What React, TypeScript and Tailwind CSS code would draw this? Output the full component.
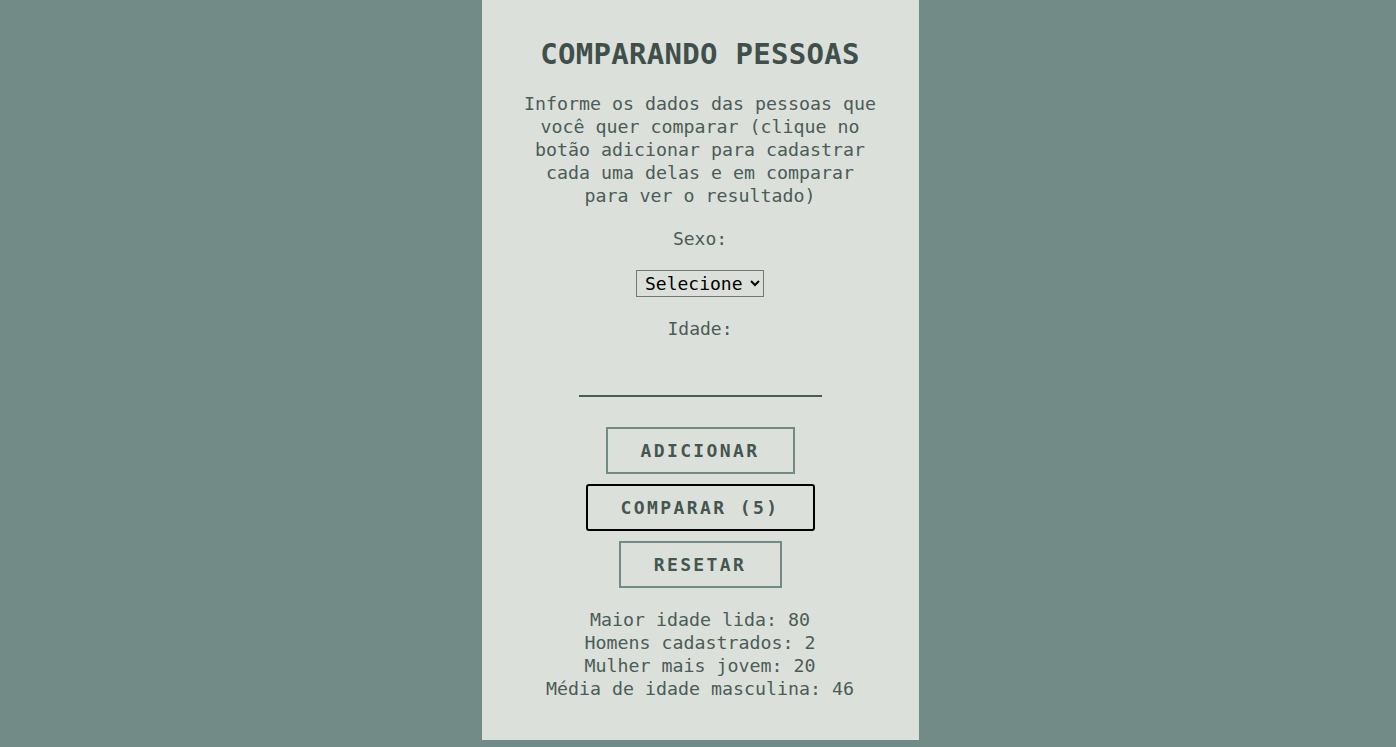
import React from "react";

const mono = { fontFamily: '"DejaVu Sans Mono", "Liberation Mono", monospace' };

export default function App() {
  return (
    <div className="min-h-[747px] w-full bg-[#738b86] pl-[4px]" style={mono}>
      <div className="mx-auto flex h-[740px] w-[437px] flex-col items-center bg-[#dce0db] text-[#4b5c57]">
        <h1 className="mt-[36px] text-[29px] font-bold leading-[36px] tracking-[0.3px] text-[#3f504b]">
          COMPARANDO PESSOAS
        </h1>
        <p className="mt-[20px] text-center text-[18.3px] leading-[23px]">
          Informe os dados das pessoas que
          <br />
          você quer comparar (clique no
          <br />
          botão adicionar para cadastrar
          <br />
          cada uma delas e em comparar
          <br />
          para ver o resultado)
        </p>
        <label className="mt-[20px] text-[18px] leading-[23px]">Sexo:</label>
        <select
          className="mt-[20px] h-[27px] border border-[#767676] bg-transparent px-[4px] text-[18px] leading-[23px] text-black"
          defaultValue=""
        >
          <option value="">Selecione</option>
          <option value="m">Masculino</option>
          <option value="f">Feminino</option>
        </select>
        <label className="mt-[20px] text-[18px] leading-[23px]">Idade:</label>
        <input
          type="number"
          className="mt-[19px] h-[38px] w-[243px] border-0 border-b-2 border-[#4b5c57] bg-transparent text-center text-[18px] outline-none"
        />
        <div className="mt-[30px] flex flex-col items-center gap-[10px]">
          <button className="h-[47px] w-[189px] border-2 border-[#738b86] text-[18px] font-bold tracking-[2.4px] text-[#44564f]">
            ADICIONAR
          </button>
          <button className="h-[47px] w-[229px] rounded-[3px] border-2 border-black text-[18px] font-bold tracking-[2.4px] text-[#44564f]">
            COMPARAR (5)
          </button>
          <button className="h-[47px] w-[163px] border-2 border-[#738b86] text-[18px] font-bold tracking-[2.4px] text-[#44564f]">
            RESETAR
          </button>
        </div>
        <div className="mt-[20px] text-center text-[18.3px] leading-[23px]">
          <div>Maior idade lida: 80</div>
          <div>Homens cadastrados: 2</div>
          <div>Mulher mais jovem: 20</div>
          <div>Média de idade masculina: 46</div>
        </div>
      </div>
    </div>
  );
}
